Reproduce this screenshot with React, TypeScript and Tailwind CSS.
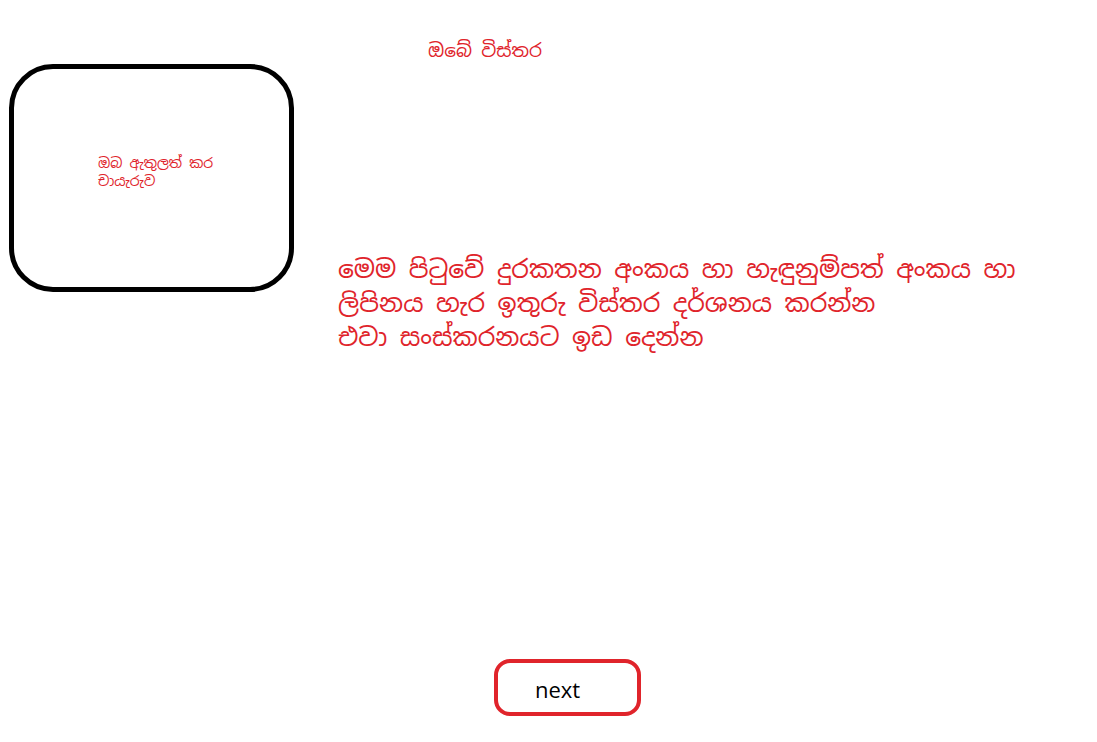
export default function App() {
  return (
    <div className="w-full h-[742px] bg-white flex flex-col font-['Noto_Sans_Sinhala','Noto_Sans','Open_Sans',sans-serif] text-[#e0242b]">
      <h1 className="pt-[38px] pl-[428px] text-[18.5px] leading-[24px] font-normal">ඔබේ විස්තර</h1>

      <div className="flex items-start mt-[2px]">
        <div className="ml-[9px] w-[285px] h-[228px] shrink-0 border-[5px] border-black rounded-[44px] pl-[84px] pt-[85px] text-[14px] leading-[18px]">
          <p>ඔබ ඇතුලත් කර</p>
          <p>චායැරුව</p>
        </div>
        <div className="ml-[44px] mt-[188px] text-[25px] leading-[34px]">
          <p>මෙම පිටුවේ දුරකතන අංකය හා හැඳුනුම්පත් අංකය හා</p>
          <p>ලිපිනය හැර ඉතුරු විස්තර දර්ශනය කරන්න</p>
          <p>එවා සංස්කරනයට ඉඩ දෙන්න</p>
        </div>
      </div>

      <div className="mt-[305px] ml-[494px]">
        <button className="w-[147px] h-[57px] border-4 border-[#e0242b] rounded-[16px] flex items-center pl-[37px] pt-[3px] text-black text-[22px] font-['Open_Sans',sans-serif]">
          next
        </button>
      </div>
    </div>
  );
}
